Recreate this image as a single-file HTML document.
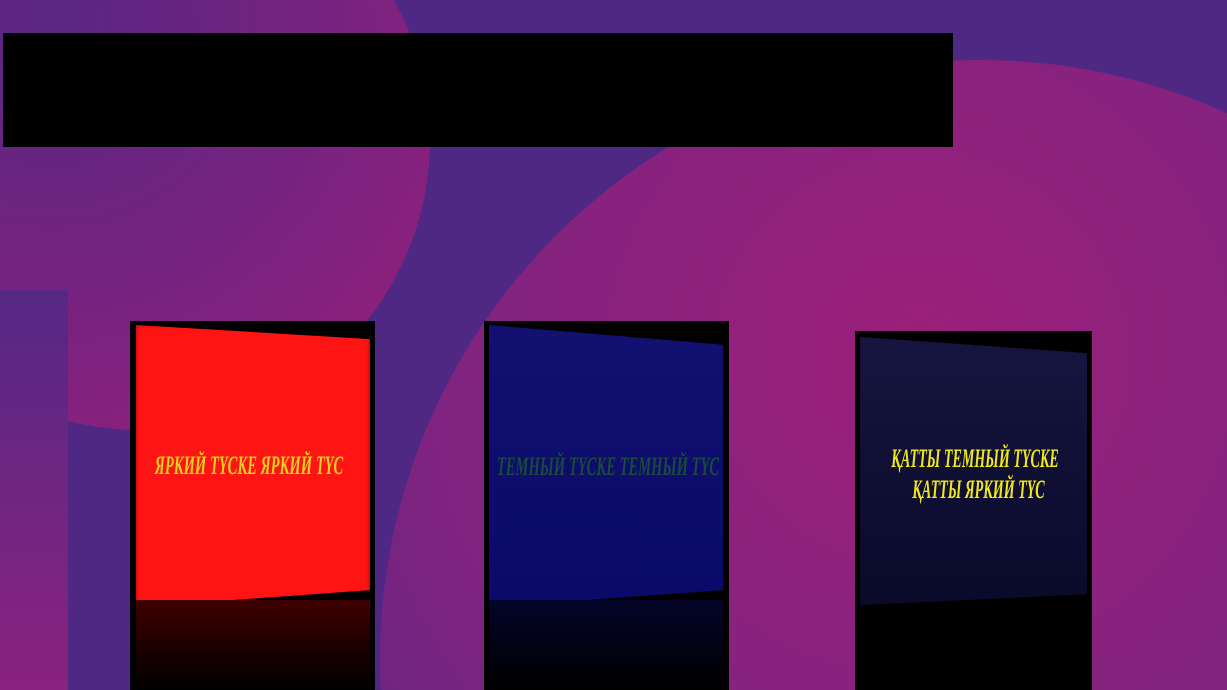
<!DOCTYPE html>
<html><head><meta charset="utf-8"><style>
html,body{margin:0;padding:0;width:1227px;height:690px;overflow:hidden}
body{background:#4f2883;font-family:"Liberation Serif",serif}
#w{position:relative;width:1227px;height:690px;overflow:hidden}
.c{position:absolute;border-radius:50%}
.box{position:absolute;background:#000}
.face{position:absolute}
.t{position:absolute;text-align:center;font-style:italic;font-weight:bold;transform:scaleX(0.56);transform-origin:center;font-size:26px;white-space:nowrap}
</style></head><body><div id="w">
<div class="c" style="left:-150px;top:-150px;width:580px;height:580px;background:radial-gradient(circle at 35% 30%,#5a2682 0%,#7a2280 55%,#9a2078 100%)"></div>
<div class="c" style="left:380px;top:60px;width:1200px;height:1200px;background:radial-gradient(circle at 45% 25%,#9c1f7a 0%,#7e2480 45%,#5a2684 75%)"></div>
<div style="position:absolute;left:0;top:290px;width:68px;height:400px;background:linear-gradient(#552884,#8a2280)"></div>
<div style="position:absolute;left:3px;top:33px;width:950px;height:114px;background:#000"></div>

<div class="box" style="left:130px;top:321px;width:245px;height:369px"></div>
<div class="face" style="left:136px;top:325px;width:234px;height:282px;background:#ff1414;clip-path:polygon(0 0,100% 5%,100% 94%,0 100%);box-shadow:inset 0 0 4px #a00"></div>
<div class="face" style="left:136px;top:600px;width:234px;height:90px;background:linear-gradient(#400000,#000)"></div>
<div class="t" style="left:49px;width:400px;top:451px;color:#e8d020">ЯРКИЙ ТҮСКЕ ЯРКИЙ ТҮС</div>

<div class="box" style="left:484px;top:321px;width:245px;height:369px"></div>
<div class="face" style="left:489px;top:325px;width:234px;height:282px;background:linear-gradient(#121070,#0a0a6a);clip-path:polygon(0 0,100% 7%,100% 94%,0 100%)"></div>
<div class="face" style="left:489px;top:600px;width:234px;height:90px;background:linear-gradient(#04042a,#000)"></div>
<div class="t" style="left:408px;width:400px;top:452px;color:#1a4a3a">ТЕМНЫЙ ТҮСКЕ ТЕМНЫЙ ТҮС</div>

<div class="box" style="left:855px;top:331px;width:237px;height:359px"></div>
<div class="face" style="left:860px;top:337px;width:227px;height:268px;background:linear-gradient(#151540,#0a0a2a);clip-path:polygon(0 0,100% 6%,100% 96%,0 100%)"></div>
<div class="t" style="left:775px;width:400px;top:443px;color:#f0e818;line-height:31px;font-size:26px;transform:scaleX(0.54)">ҚАТТЫ ТЕМНЫЙ ТҮСКЕ<br>&nbsp;&nbsp;ҚАТТЫ ЯРКИЙ ТҮС</div>
</div></body></html>
